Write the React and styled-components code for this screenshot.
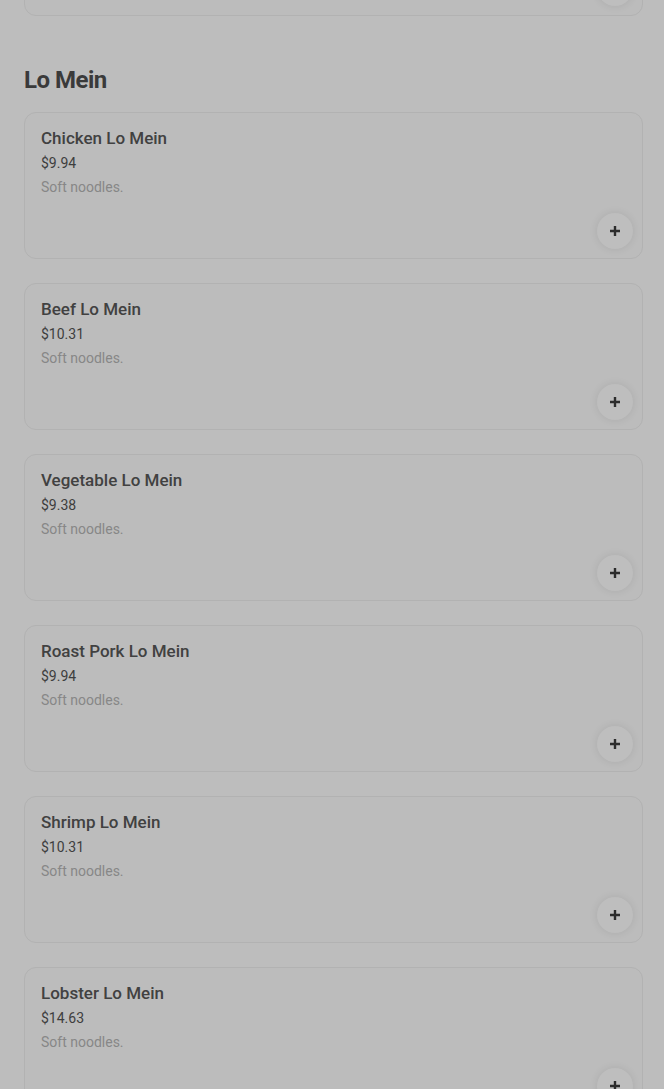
import styled, { createGlobalStyle } from "styled-components";

const GlobalStyle = createGlobalStyle`
  html, body {
    margin: 0;
    padding: 0;
    background: #bdbdbd;
    font-family: Roboto, "Liberation Sans", sans-serif;
    overflow: hidden;
  }
`;

const Page = styled.div`
  height: 1089px;
  overflow: hidden;
  padding: 0 21px 0 24px;
`;

const Section = styled.section`
  margin-top: ${({ $clipTop }) => ($clipTop ? `-${$clipTop}px` : "0")};
`;

const List = styled.div`
  display: flex;
  flex-direction: column;
  gap: 24px;
`;

const SectionTitle = styled.h2`
  margin: 48px 0 16px;
  font-size: 24px;
  line-height: 32px;
  font-weight: 700;
  letter-spacing: -0.5px;
  color: #3a3a3a;
`;

const Card = styled.div`
  box-sizing: border-box;
  height: 147px;
  display: flex;
  flex-direction: column;
  padding: 14px 9px 9px 16px;
  border: 1px solid #b2b2b2;
  border-radius: 12px;
  background: #bcbcbc;
`;

const Name = styled.div`
  font-size: 17px;
  line-height: 22px;
  font-weight: 500;
  color: #414141;
`;

const Price = styled.div`
  margin-top: 4px;
  font-size: 14px;
  line-height: 20px;
  color: #3e3e3e;
`;

const Desc = styled.div`
  margin-top: 4px;
  font-size: 14px;
  line-height: 20px;
  color: #878787;
`;

const AddButton = styled.button`
  margin-top: auto;
  align-self: flex-end;
  width: 36px;
  height: 36px;
  border: none;
  border-radius: 50%;
  background: #bebebe;
  box-shadow: 0 0 8px rgba(0, 0, 0, 0.09);
  display: flex;
  align-items: center;
  justify-content: center;
  padding: 0;
  color: #2c2c2c;
`;

const PlusIcon = () => (
  <svg width="12" height="12" viewBox="0 0 12 12">
    <path d="M6 1v10M1 6h10" stroke="currentColor" strokeWidth="2.4" />
  </svg>
);

const items = [
  { name: "Chicken Lo Mein", price: "$9.94" },
  { name: "Beef Lo Mein", price: "$10.31" },
  { name: "Vegetable Lo Mein", price: "$9.38" },
  { name: "Roast Pork Lo Mein", price: "$9.94" },
  { name: "Shrimp Lo Mein", price: "$10.31" },
  { name: "Lobster Lo Mein", price: "$14.63" },
];

function MenuCard({ name, price, desc }) {
  return (
    <Card>
      {name && <Name>{name}</Name>}
      {price && <Price>{price}</Price>}
      {desc && <Desc>{desc}</Desc>}
      <AddButton aria-label="Add">
        <PlusIcon />
      </AddButton>
    </Card>
  );
}

export default function App() {
  return (
    <>
      <GlobalStyle />
      <Page>
        <Section $clipTop={131}>
          <MenuCard />
        </Section>
        <Section>
          <SectionTitle>Lo Mein</SectionTitle>
          <List>
            {items.map((item) => (
              <MenuCard key={item.name} name={item.name} price={item.price} desc="Soft noodles." />
            ))}
          </List>
        </Section>
      </Page>
    </>
  );
}
